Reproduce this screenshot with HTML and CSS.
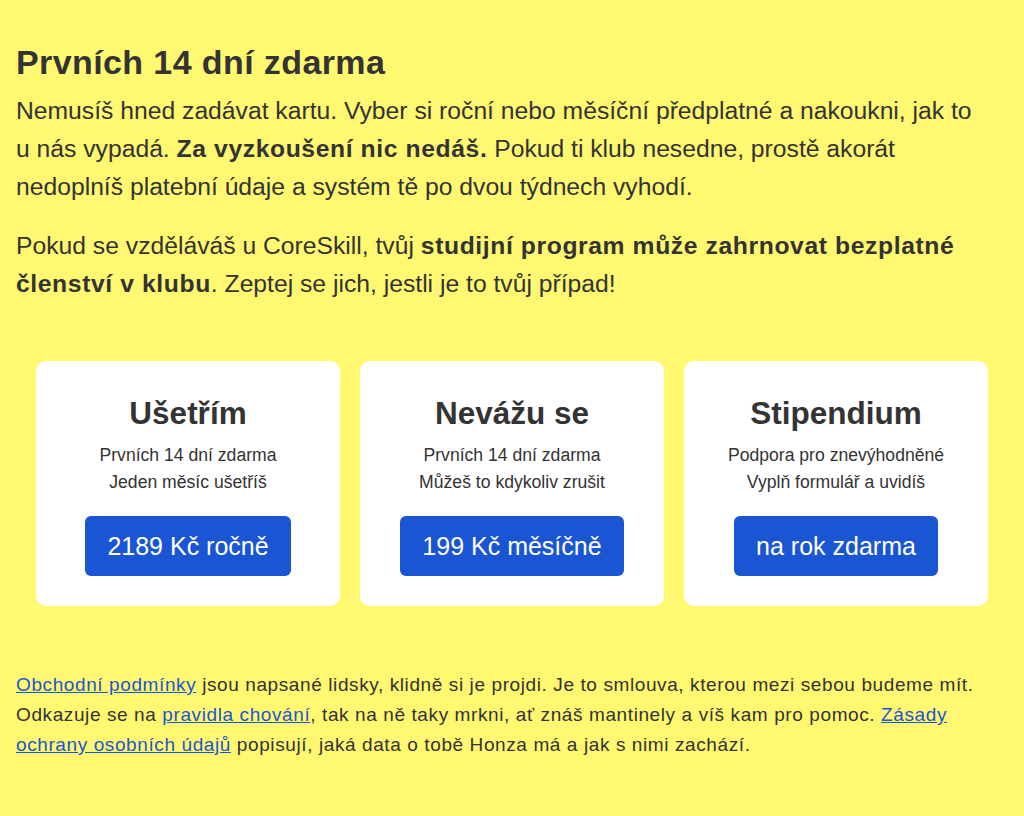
FILE: index.html
```html
<!DOCTYPE html>
<html lang="cs">
<head>
<meta charset="utf-8">
<title>Prvních 14 dní zdarma</title>
<link rel="stylesheet" href="styles.css">
</head>
<body>
<main class="page">
  <h1 class="title">Prvních 14 dní zdarma</h1>
  <p class="lead">Nemusíš hned zadávat kartu. Vyber si roční nebo měsíční předplatné a nakoukni, jak to u nás vypadá. <strong>Za vyzkoušení nic nedáš.</strong> Pokud ti klub nesedne, prostě akorát nedoplníš platební údaje a systém tě po dvou týdnech vyhodí.</p>
  <p class="lead">Pokud se vzděláváš u CoreSkill, tvůj <strong>studijní program může zahrnovat bezplatné členství v klubu</strong>. Zeptej se jich, jestli je to tvůj případ!</p>

  <section class="plans">
    <div class="card">
      <h2 class="card-title">Ušetřím</h2>
      <p class="card-text">Prvních 14 dní zdarma<br>Jeden měsíc ušetříš</p>
      <a class="btn" href="#">2189 Kč ročně</a>
    </div>
    <div class="card">
      <h2 class="card-title">Nevážu se</h2>
      <p class="card-text">Prvních 14 dní zdarma<br>Můžeš to kdykoliv zrušit</p>
      <a class="btn" href="#">199 Kč měsíčně</a>
    </div>
    <div class="card">
      <h2 class="card-title">Stipendium</h2>
      <p class="card-text">Podpora pro znevýhodněné<br>Vyplň formulář a uvidíš</p>
      <a class="btn" href="#">na rok zdarma</a>
    </div>
  </section>

  <p class="note"><a href="#">Obchodní podmínky</a> jsou napsané lidsky, klidně si je projdi. Je to smlouva, kterou mezi sebou budeme mít. Odkazuje se na <a href="#">pravidla chování</a>, tak na ně taky mrkni, ať znáš mantinely a víš kam pro pomoc. <a href="#">Zásady ochrany osobních údajů</a> popisují, jaká data o tobě Honza má a jak s nimi zachází.</p>
</main>
</body>
</html>
```

FILE: styles.css
```css
html, body {
  margin: 0;
  padding: 0;
  background: #fff870;
}
body {
  font-family: "Liberation Sans", Arial, sans-serif;
  color: #333333;
}
.page {
  padding: 43px 16px 16px;
}
.title {
  margin: 0 0 11px;
  font-size: 34px;
  letter-spacing: 0.4px;
  line-height: 38px;
  font-weight: 700;
}
.lead {
  max-width: 970px;
  margin: 0 0 21px;
  font-size: 24.7px;
  line-height: 38px;
}
.lead strong {
  font-weight: 700;
  letter-spacing: 0.6px;
}
.plans {
  display: grid;
  grid-template-columns: repeat(3, 1fr);
  gap: 20px;
  padding: 20px;
  margin-top: 38px;
}
.card {
  background: #ffffff;
  border-radius: 10px;
  padding: 30px 20px 30px;
  display: flex;
  flex-direction: column;
  align-items: center;
  text-align: center;
}
.card-title {
  margin: 2px 0 0;
  font-size: 31.5px;
  line-height: 40px;
  font-weight: 700;
}
.card-text {
  margin: 9px 0 20px;
  font-size: 17.6px;
  line-height: 27px;
}
.btn {
  display: inline-block;
  background: #1a56d4;
  color: #ffffff;
  text-decoration: none;
  font-size: 25px;
  line-height: 60px;
  padding: 0 22px;
  border-radius: 6px;
}
.note {
  max-width: 970px;
  margin: 44px 0 0;
  font-size: 19px;
  letter-spacing: 0.6px;
  line-height: 30px;
}
.note a {
  color: #1a56d4;
}
```
